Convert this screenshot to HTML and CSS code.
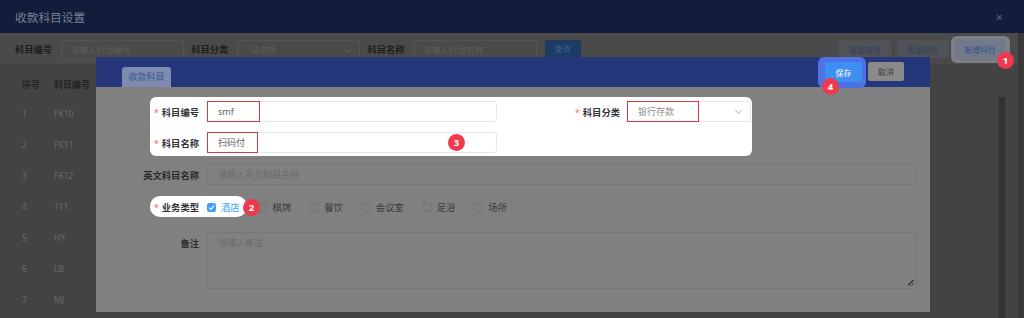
FILE: index.html
```html
<!DOCTYPE html>
<html lang="zh">

<head>
    <meta charset="UTF-8">
    <title>收款科目设置</title>
    <link rel="stylesheet" href="styles.css">
</head>

<body>
    <!-- Halaman utama (di belakang dialog) -->
    <div class="page-header">
        <span class="page-title">收款科目设置</span>
        <span class="page-close">×</span>
    </div>

    <div class="page-body">
        <div class="page-main">
            <div class="toolbar">
                <span class="tb-label">科目编号</span>
                <div class="tb-input">请输入科目编号</div>
                <span class="tb-label">科目分类</span>
                <div class="tb-input tb-select">--请选择<span class="chevron dim"></span></div>
                <span class="tb-label">科目名称</span>
                <div class="tb-input">请输入科目名称</div>
                <button class="btn-search">查询</button>

                <div class="toolbar-actions">
                    <button class="btn-plain">批量禁用</button>
                    <button class="btn-plain">批量启用</button>
                    <button class="btn-plain btn-add">新增科目</button>
                </div>
            </div>

            <div class="table-area">
                <table class="list-table">
                    <thead>
                        <tr><th class="col-no">序号</th><th>科目编号</th></tr>
                    </thead>
                    <tbody>
                        <tr><td>1</td><td>FK10</td></tr>
                        <tr><td>2</td><td>FK11</td></tr>
                        <tr><td>3</td><td>FK12</td></tr>
                        <tr><td>4</td><td>111</td></tr>
                        <tr><td>5</td><td>HY</td></tr>
                        <tr><td>6</td><td>LB</td></tr>
                        <tr><td>7</td><td>MJ</td></tr>
                    </tbody>
                </table>
                <div class="scroll-thumb"></div>
            </div>
        </div>
        <div class="page-scroll"></div>
    </div>

    <!-- Sorotan tombol tambah -->
    <div class="spot spot-add"></div>
    <button class="btn-add-lit">新增科目</button>
    <span class="badge badge-1">1</span>

    <!-- Dialog -->
    <div class="modal">
        <div class="modal-header">
            <div class="modal-tab">收款科目</div>
            <div class="spot spot-save"></div>
            <div class="modal-actions">
                <button class="btn-save">保存</button>
                <button class="btn-cancel">取消</button>
            </div>
            <span class="badge badge-4">4</span>
        </div>

        <div class="modal-body">
            <div class="spot spot-form"></div>
            <div class="spot spot-type"></div>

            <div class="form-row row-1 lit">
                <div class="form-item">
                    <label class="form-label"><i>*</i>科目编号</label>
                    <div class="input lit-input">smf<span class="mark mark-code"></span></div>
                </div>
                <div class="form-item item-right">
                    <label class="form-label label-right"><i>*</i>科目分类</label>
                    <div class="input lit-input select-lit">银行存款<span class="chevron"></span><span class="mark mark-type"></span></div>
                </div>
            </div>

            <div class="form-row row-2 lit">
                <div class="form-item">
                    <label class="form-label"><i>*</i>科目名称</label>
                    <div class="input lit-input">扫码付<span class="mark mark-name"></span><span class="badge badge-3">3</span></div>
                </div>
            </div>

            <div class="form-row row-3">
                <div class="form-item wide">
                    <label class="form-label">英文科目名称</label>
                    <div class="input dim-input">请输入英文科目名称</div>
                </div>
            </div>

            <div class="form-row row-4">
                <label class="form-label lit"><i>*</i>业务类型</label>
                <div class="check-group">
                    <span class="check lit">
                        <span class="box checked">
                            <svg width="7" height="7" viewBox="0 0 7 7"><path d="M1 3.6 L2.9 5.4 L6 1.6" fill="none" stroke="#fff" stroke-width="1.2"/></svg>
                        </span>
                        <span class="check-text">酒店</span>
                    </span>
                    <span class="badge badge-2">2</span>
                    <span class="check"><span class="box"></span><span class="check-text">棋牌</span></span>
                    <span class="check"><span class="box"></span><span class="check-text">餐饮</span></span>
                    <span class="check"><span class="box"></span><span class="check-text">会议室</span></span>
                    <span class="check"><span class="box"></span><span class="check-text">足浴</span></span>
                    <span class="check"><span class="box"></span><span class="check-text">场所</span></span>
                </div>
            </div>

            <div class="form-row row-5">
                <div class="form-item wide top">
                    <label class="form-label">备注</label>
                    <div class="input dim-input textarea">请输入备注<span class="resize"></span></div>
                </div>
            </div>
        </div>
    </div>
</body>

</html>
```

FILE: styles.css
```css
/* Dasar halaman */
body {
    margin: 0;
    width: 1024px;
    height: 318px;
    overflow: hidden;
    position: relative;
    background-color: #3e3e3e;
    font-family: 'Noto Sans', 'Noto Sans CJK SC', sans-serif;
}

button {
    font-family: inherit;
    border: none;
    padding: 0;
    cursor: pointer;
}

/* Header halaman */
.page-header {
    height: 33px;
    background-color: #141c3c;
    display: flex;
    align-items: center;
    padding: 0 21px 0 15px;
}

.page-title {
    font-size: 11.7px;
    color: #7a8196;
}

.page-close {
    margin-left: auto;
    font-size: 13px;
    color: #5f6577;
}

.page-body {
    display: flex;
    height: 285px;
}

.page-main {
    flex: 1;
    background-color: #434343;
}

.page-scroll {
    width: 6px;
    background-color: #393939;
}

/* Baris pencarian */
.toolbar {
    display: flex;
    align-items: flex-start;
    height: 31px;
    padding: 7px 13px 0 15px;
    box-sizing: border-box;
    background-color: #4a4a4a;
}

.tb-label {
    font-size: 9.3px;
    font-weight: bold;
    color: #1e1e1e;
    line-height: 20px;
    margin-right: 9px;
}

.tb-input {
    width: 123px;
    height: 20px;
    box-sizing: border-box;
    border: 1px solid #555;
    border-radius: 3px;
    padding-left: 9px;
    font-size: 8.5px;
    line-height: 18px;
    color: #5e5e5e;
    margin-right: 7px;
    position: relative;
}

.tb-select {
    padding-left: 7px;
}

.chevron {
    position: absolute;
    right: 9px;
    top: 6px;
    width: 4px;
    height: 4px;
    border-right: 1px solid #c0c4cc;
    border-bottom: 1px solid #c0c4cc;
    transform: rotate(45deg);
}

.chevron.dim {
    border-color: #5c5c5c;
}

.btn-search {
    width: 36px;
    height: 17px;
    margin-left: 1px;
    border-radius: 2px;
    background-color: #1c3c64;
    color: #3a6290;
    font-size: 8px;
}

.toolbar-actions {
    margin-left: auto;
    display: flex;
    gap: 6px;
}

.btn-plain {
    width: 52px;
    height: 18px;
    border-radius: 2px;
    background-color: #4f5257;
    color: #34405a;
    font-size: 7.8px;
}

.btn-add {
    width: 50px;
    visibility: hidden;
}

/* Tabel daftar */
.table-area {
    display: flex;
    margin-top: 6px;
    padding-left: 14px;
}

.list-table {
    flex: 1;
    border-collapse: collapse;
    font-size: 8.5px;
    align-self: flex-start;
}

.list-table th {
    height: 28px;
    padding: 0 0 0 8px;
    text-align: left;
    color: #232323;
    font-weight: bold;
    font-size: 9px;
}

.list-table .col-no {
    width: 24px;
}

.list-table td {
    height: 31px;
    padding: 0 0 0 8px;
    color: #6a6a6a;
}

.scroll-thumb {
    width: 6px;
    height: 230px;
    margin: 27px 13px 0 0;
    background-color: #323232;
}

/* Sorotan tutorial */
.spot {
    position: absolute;
    border-radius: 6px;
}

.spot-add {
    left: 951px;
    top: 36px;
    width: 59px;
    height: 27px;
    background-color: #7b7f87;
}

.btn-add-lit {
    position: absolute;
    left: 955px;
    top: 39px;
    width: 50px;
    height: 21px;
    border-radius: 3px;
    background-color: #727989;
    color: #33508e;
    font-size: 7.8px;
}

.badge {
    position: absolute;
    width: 17px;
    height: 17px;
    border-radius: 50%;
    background-color: #ef3a4e;
    color: #ffffff;
    font-size: 9.5px;
    font-weight: bold;
    display: flex;
    align-items: center;
    justify-content: center;
    z-index: 5;
    font-style: normal;
}

.badge-1 {
    left: 997px;
    top: 52px;
}

/* Dialog */
.modal {
    position: absolute;
    left: 96px;
    top: 57px;
    width: 834px;
    height: 255px;
    background-color: #808080;
}

.modal-header {
    position: relative;
    height: 30px;
    display: flex;
    padding: 0 26px;
    background-color: #25367a;
}

.modal-tab {
    align-self: flex-end;
    width: 49px;
    height: 20px;
    border-radius: 3px 3px 0 0;
    background-color: #7d8bae;
    color: #3b5596;
    font-size: 9px;
    line-height: 20px;
    text-align: center;
}

.spot-save {
    left: 722px;
    top: 0;
    width: 48px;
    height: 31px;
    background-color: #4e71e6;
}

.modal-actions {
    position: relative;
    margin-left: auto;
    padding-top: 5px;
    display: flex;
    gap: 6px;
    align-items: flex-start;
}

.btn-save {
    width: 37px;
    height: 20px;
    border-radius: 2px;
    background-color: #3f8ff3;
    color: #ffffff;
    font-size: 8px;
}

.btn-cancel {
    width: 36px;
    height: 19px;
    border-radius: 2px;
    background-color: #8a8a8a;
    color: #3a3a3a;
    font-size: 8px;
}

.badge-4 {
    left: 726px;
    top: 21px;
}

.modal-body {
    position: relative;
    padding: 14px 13px 23px 0;
}

.spot-form {
    left: 54px;
    top: 10px;
    width: 602px;
    height: 59px;
    background-color: #ffffff;
}

.spot-type {
    left: 54px;
    top: 109px;
    width: 97px;
    height: 21px;
    border-radius: 10px;
    background-color: #ffffff;
}

/* Form */
.form-row {
    position: relative;
    display: flex;
    align-items: center;
}

.row-1 {
    margin-bottom: 10px;
}

.row-2 {
    margin-bottom: 11px;
}

.row-3 {
    margin-bottom: 11px;
}

.row-4 {
    height: 22px;
    margin-bottom: 14px;
}

.form-item {
    display: flex;
    align-items: center;
}

.form-item.wide {
    flex: 1;
}

.form-item.top {
    align-items: flex-start;
}

.item-right {
    margin-left: 30px;
}

.form-label {
    width: 111px;
    box-sizing: border-box;
    padding-right: 8px;
    text-align: right;
    font-size: 9.3px;
    font-weight: bold;
    color: #2b2b2b;
    white-space: nowrap;
}

.form-label i {
    font-style: normal;
    font-weight: normal;
    color: #f56c6c;
    margin-right: 3px;
}

.label-right {
    width: 100px;
    padding-right: 7px;
}

.lit .form-label,
.form-label.lit {
    color: #333333;
}

.form-label.lit {
    position: relative;
}

.top .form-label {
    padding-top: 4px;
}

.input {
    position: relative;
    height: 21px;
    box-sizing: border-box;
    border-radius: 3px;
    padding-left: 10px;
    font-size: 9px;
    line-height: 19px;
}

.lit-input {
    width: 290px;
    border: 1px solid #e4e7ed;
    background-color: #ffffff;
    color: #606266;
}

.select-lit {
    width: 124px;
    color: #8c8c8c;
}

.dim-input {
    flex: 1;
    border: 1px solid #767676;
    color: #6c6c6c;
}

.textarea {
    height: 57px;
    line-height: 20px;
}

.resize {
    position: absolute;
    right: 2px;
    bottom: 2px;
    width: 6px;
    height: 6px;
    background: linear-gradient(135deg, transparent 40%, #3a3a3a 40%, #3a3a3a 52%, transparent 52%, transparent 70%, #3a3a3a 70%, #3a3a3a 82%, transparent 82%);
}

/* Kotak anotasi merah */
.mark {
    position: absolute;
    top: -1px;
    left: -1px;
    height: 21px;
    box-sizing: border-box;
    border: 1.5px solid #d6383c;
}

.mark-code {
    width: 53px;
}

.mark-name {
    width: 51px;
}

.mark-type {
    width: 72px;
}

.badge-3 {
    left: 240px;
    top: 1px;
}

/* Checkbox jenis usaha */
.check-group {
    display: flex;
    align-items: center;
    position: relative;
    height: 22px;
}

.check {
    display: flex;
    align-items: center;
    gap: 5px;
    margin-right: 19px;
    font-size: 9.3px;
    color: #3a3a3a;
}

.check.lit {
    position: relative;
    color: #409eff;
}

.box {
    width: 9px;
    height: 9px;
    box-sizing: border-box;
    border: 1px solid #727272;
    border-radius: 2px;
    display: flex;
    align-items: center;
    justify-content: center;
}

.box.checked {
    background-color: #409eff;
    border-color: #409eff;
}

.badge-2 {
    left: 36px;
    top: 3px;
}
```
